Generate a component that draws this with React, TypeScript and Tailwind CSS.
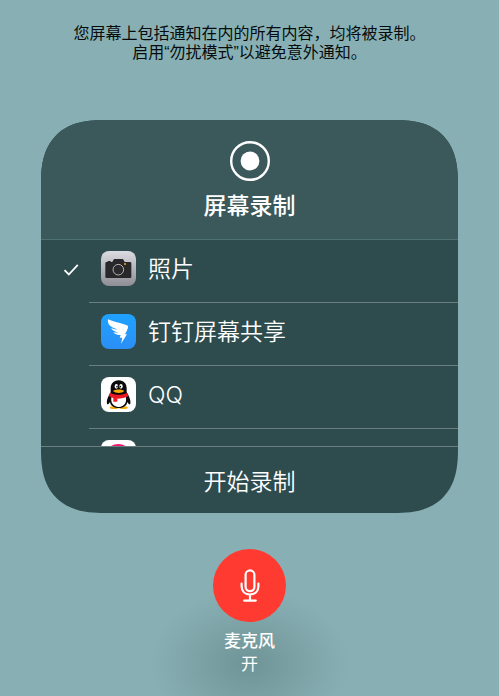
import { useState } from 'react'
import type { ReactNode } from 'react'
import { clsx } from 'clsx'

const PhotosIcon = () => (
  <svg viewBox="0 0 105 105" className="size-full" aria-hidden="true">
    <defs>
      <linearGradient id="camera-bg" x1="0" y1="0" x2="0" y2="1">
        <stop offset="0" stopColor="#dcdbe2" />
        <stop offset="1" stopColor="#8e8d95" />
      </linearGradient>
    </defs>
    <rect width="105" height="105" fill="url(#camera-bg)" />
    <path
      d="M18 33h2v-3h9v3h4c3 0 4-8 7-9h25c3 1 4 9 7 9h14c3 0 5 1 5 4v40c0 3-2 4-4 4H17c-2 0-4-1-4-4V37c0-3 2-4 5-4z"
      fill="#28282b"
    />
    <circle cx="52" cy="56" r="19" fill="#1f1f22" />
    <circle cx="52" cy="56" r="16" fill="#2b2b2e" stroke="#b9b9be" strokeWidth="3" />
    <circle cx="72" cy="39" r="3" fill="#f5a623" />
  </svg>
)

const DingTalkIcon = () => (
  <svg viewBox="0 0 105 105" className="size-full" aria-hidden="true">
    <defs>
      <linearGradient id="ding-bg" x1="0" y1="0" x2="0" y2="1">
        <stop offset="0" stopColor="#1fa2ff" />
        <stop offset="1" stopColor="#2b8ff5" />
      </linearGradient>
    </defs>
    <rect width="105" height="105" fill="url(#ding-bg)" />
    <path
      d="M21 16c14 7 37 11 55 17 5 2 6 4 5 8-2 7-5 13-9 20h6L60 89l4-18h-8l3-8c-8 1-17-1-22-8 6 1 11 1 16 0-10-1-19-5-23-13 8 3 15 5 22 5-13-4-25-9-29-17-2-5-3-10-2-14z"
      fill="#fff"
    />
  </svg>
)

const QQIcon = () => (
  <svg viewBox="0 0 105 105" className="size-full" aria-hidden="true">
    <rect width="105" height="105" fill="#fff" />
    <ellipse cx="39" cy="92" rx="13" ry="4" fill="#faab07" />
    <ellipse cx="67" cy="92" rx="13" ry="4" fill="#faab07" />
    <path
      d="M53 10C37 10 29 21 29 34v12C23 56 16 68 18 80c1 4 5 2 9-5 2 12 13 18 26 18s24-6 26-18c4 7 8 9 9 5 2-12-5-24-11-34V34c0-13-8-24-24-24z"
      fill="#0a0a0a"
    />
    <path d="M32 58h42c5 18-4 32-21 32S27 76 32 58z" fill="#fff" />
    <path d="M27 47c16 8 36 8 52 0l3 10c-10 6-21 8-33 8v9H37V63c-5-1-9-3-13-6z" fill="#eb1923" />
    <ellipse cx="46" cy="28" rx="5" ry="7" fill="#fff" />
    <ellipse cx="60" cy="28" rx="5" ry="7" fill="#fff" />
    <circle cx="48" cy="29" r="2.4" fill="#000" />
    <circle cx="58" cy="29" r="2.4" fill="#000" />
    <path d="M36 42c9-6 25-6 34 0-7 8-27 8-34 0z" fill="#faab07" />
  </svg>
)

const LiveIcon = () => (
  <svg viewBox="0 0 105 105" className="size-full" aria-hidden="true">
    <rect width="105" height="105" fill="#fff" />
    <circle cx="52" cy="54" r="42" fill="#f5146e" />
  </svg>
)

type Target = { id: string; name?: string; icon: ReactNode }

const targets: Target[] = [
  { id: 'photos', name: '照片', icon: <PhotosIcon /> },
  { id: 'dingtalk', name: '钉钉屏幕共享', icon: <DingTalkIcon /> },
  { id: 'qq', name: 'QQ', icon: <QQIcon /> },
  { id: 'live', icon: <LiveIcon /> },
]

export default function App() {
  const [selected, setSelected] = useState('photos')
  const [micOn, setMicOn] = useState(true)

  return (
    <main
      lang="zh-CN"
      className="flex min-h-screen flex-col items-center bg-[#88b0b4] bg-[radial-gradient(100px_75px_at_50%_664px,#6f9497,#7ca2a6_50%,#88b0b400)] font-['Inter','Noto_Sans_CJK_SC',sans-serif] text-white"
    >
      <p className="px-4 pt-6 text-center font-['Liberation_Sans','Noto_Sans_CJK_SC',sans-serif] text-[16px] leading-[19px] text-[#060c0d]">
        您屏幕上包括通知在内的所有内容，均将被录制。
        <br />
        启用“勿扰模式”以避免意外通知。
      </p>

      <div className="mt-[58px] w-full px-[41px]">
        <section className="overflow-hidden rounded-[52px] bg-[#2e4c4e] supports-[corner-shape:squircle]:rounded-[64px] supports-[corner-shape:squircle]:[corner-shape:superellipse(1.35)]">
          <header className="flex flex-col items-center border-b border-[#4e7274] bg-[#3b585b] pt-[21px] pb-4">
            <svg viewBox="0 0 40 40" className="size-10" aria-hidden="true">
              <circle cx="20" cy="20" r="18.8" fill="none" stroke="#fff" strokeWidth="2.4" />
              <circle cx="20" cy="20" r="9.4" fill="#fff" />
            </svg>
            <h1 className="mt-2 text-[23px] leading-[34px] font-medium">屏幕录制</h1>
          </header>

          <ul className="h-[206px] overflow-y-auto [scrollbar-width:none]">
            {targets.map((target) => (
              <li key={target.id}>
                <label className="flex h-[63px] cursor-pointer">
                  <input
                    type="radio"
                    name="target"
                    className="peer sr-only"
                    aria-label={target.name ?? target.id}
                    checked={selected === target.id}
                    onChange={() => setSelected(target.id)}
                  />
                  <span className="flex w-12 shrink-0 justify-end pt-[23px] pr-[10px] opacity-0 peer-checked:opacity-100">
                    <svg viewBox="0 0 16 14" className="h-[14px] w-4" fill="none" stroke="#fff" strokeWidth="1.8" aria-hidden="true">
                      <path d="M1.5 7.2l4.3 4.3L14.8 1.8" />
                    </svg>
                  </span>
                  <span className="flex flex-1 items-start border-b border-[#6b7e80] pt-[11px] pl-3">
                    <span className="size-[35px] overflow-hidden rounded-lg">{target.icon}</span>
                    <span className="ml-3 text-[23px] leading-[37px] font-[350]">{target.name}</span>
                  </span>
                </label>
              </li>
            ))}
          </ul>

          <button type="button" className="block w-full border-t border-[#6b7e80] pt-[17px] pb-[13px] text-[23px] leading-9 font-[350]">
            开始录制
          </button>
        </section>
      </div>

      <button
        type="button"
        aria-pressed={micOn}
        onClick={() => setMicOn((prev) => !prev)}
        className="mt-9 flex flex-col items-center pb-5 text-[17px] leading-[23px]"
      >
        <span className={clsx('mb-2 flex size-[73px] items-center justify-center rounded-full', micOn ? 'bg-[#ff3a30]' : 'bg-[#3b585b]')}>
          <svg viewBox="0 0 20 34" className="h-[34px] w-5" fill="none" stroke="#fff" strokeWidth="2.2" strokeLinecap="round" aria-hidden="true">
            <rect x="5.6" y="1.4" width="8.8" height="20.8" rx="4.4" />
            <path d="M1.6 14.5v2.8c0 5 3.4 8.2 8.4 8.2s8.4-3.2 8.4-8.2v-2.8M10 25.5v6M4.2 31.6h11.6" />
          </svg>
        </span>
        <span className="font-medium">麦克风</span>
        <span>{micOn ? '开' : '关'}</span>
      </button>
    </main>
  )
}
